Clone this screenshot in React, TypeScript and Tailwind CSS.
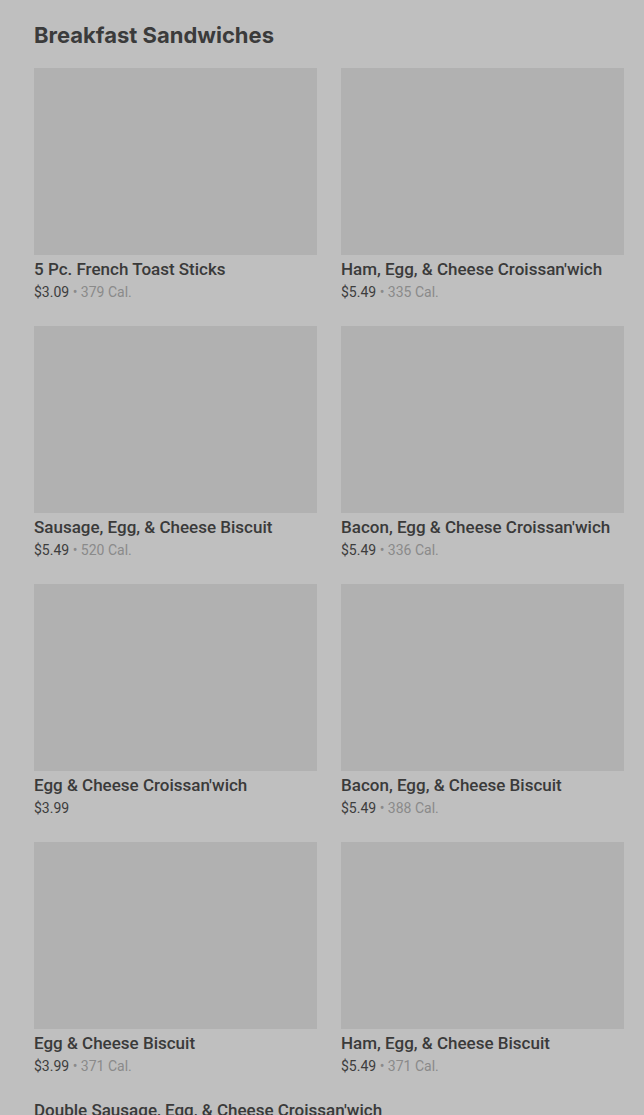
const items = [
  { name: '5 Pc. French Toast Sticks', price: '$3.09', cal: '379 Cal.' },
  { name: "Ham, Egg, & Cheese Croissan'wich", price: '$5.49', cal: '335 Cal.' },
  { name: 'Sausage, Egg, & Cheese Biscuit', price: '$5.49', cal: '520 Cal.' },
  { name: "Bacon, Egg & Cheese Croissan'wich", price: '$5.49', cal: '336 Cal.' },
  { name: "Egg & Cheese Croissan'wich", price: '$3.99', cal: '' },
  { name: 'Bacon, Egg, & Cheese Biscuit', price: '$5.49', cal: '388 Cal.' },
  { name: 'Egg & Cheese Biscuit', price: '$3.99', cal: '371 Cal.' },
  { name: 'Ham, Egg, & Cheese Biscuit', price: '$5.49', cal: '371 Cal.' },
]

export default function App() {
  return (
    <div
      className="h-[1115px] overflow-hidden bg-[#bfbfbf] pl-[34px] pr-[20px] pt-[20px]"
      style={{ fontFamily: 'Roboto, "Liberation Sans", sans-serif' }}
    >
      <h2
        className="text-[22px] leading-[30px] font-bold text-[#3b3b3b]"
        style={{ fontFamily: 'Inter, "Liberation Sans", sans-serif' }}
      >
        Breakfast Sandwiches
      </h2>

      <div className="mt-[18px] grid grid-cols-2 gap-x-[24px] gap-y-[25px]">
        {items.map((item) => (
          <div key={item.name} className="flex flex-col">
            <div className="h-[187px] bg-[#b1b1b1]" />
            <p className="mt-[4px] text-[17px] leading-[20px] font-medium text-[#3a3a3a] whitespace-nowrap">
              {item.name}
            </p>
            <p className="mt-[4px] text-[14px] leading-[18px] text-[#3d3d3d]">
              {item.price}
              {item.cal && (
                <>
                  <span className="text-[#8a8a8a]"> • </span>
                  <span className="text-[#8a8a8a]">{item.cal}</span>
                </>
              )}
            </p>
          </div>
        ))}
        <div className="col-span-2">
          <p className="text-[17px] leading-[20px] font-medium text-[#3a3a3a] whitespace-nowrap">
            Double Sausage, Egg, &amp; Cheese Croissan'wich
          </p>
        </div>
      </div>
    </div>
  )
}
